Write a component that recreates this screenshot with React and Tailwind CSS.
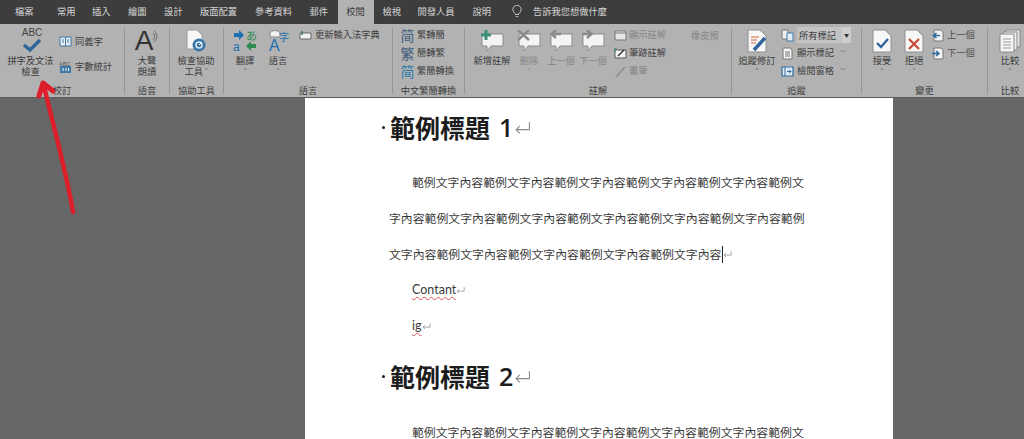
const tabs = [
  ['檔案', 'ml-[15px] mr-[23.5px]'],
  ['常用', 'mr-[16.5px]'],
  ['插入', 'mr-[17.5px]'],
  ['繪圖', 'mr-[17.5px]'],
  ['設計', 'mr-[17.5px]'],
  ['版面配置', 'mr-[18px]'],
  ['參考資料', 'mr-[17.5px]'],
  ['郵件', 'mr-[9.5px]'],
]
const tabsAfter = [
  ['檢視', 'ml-[9px] mr-[16.5px]'],
  ['開發人員', 'mr-[18px]'],
  ['說明', 'mr-[21px]'],
]

const line1 = '範例文字內容'.repeat(5) + '範例文'
const line2 = '字內容' + '範例文字內容'.repeat(5) + '範例'
const line3 = '文字內容' + '範例文字內容'.repeat(4)

function Ret({ big }) {
  return (
    <svg viewBox="0 0 16 12" className={big ? 'ml-[1px] h-[13px] w-[17px] shrink-0' : 'h-[8px] w-[9px] shrink-0'} fill="none" stroke="#8a8a8a" strokeWidth={big ? 1 : 1.3}>
      <path d="M14.5 1v7H2M5.5 4.5 2 8l3.5 3.5" />
    </svg>
  )
}

function Big({ w, icon, lines, off, className = '' }) {
  return (
    <div className={`flex shrink-0 flex-col items-center ${w} ${className}`}>
      <div className="flex h-[28px] w-full items-center justify-center">{icon}</div>
      {lines.map((l) => (
        <span key={l} className={`whitespace-nowrap text-[9.25px] leading-[11px] ${off ? 'text-[#868686]' : 'text-[#3d3d3d]'}`}>{l}</span>
      ))}
    </div>
  )
}

function Small({ icon, text, off, caret, gap = 'mr-[4px]', className = '' }) {
  return (
    <div className={`flex h-[18px] items-center whitespace-nowrap text-[9.25px] ${off ? 'text-[#868686]' : 'text-[#3d3d3d]'} ${className}`}>
      <span className={`flex w-[13px] shrink-0 justify-center ${gap}`}>{icon}</span>
      {text}
      {caret && <span className="ml-[6px] text-[6px] leading-[8px] text-[#666]">﹀</span>}
    </div>
  )
}

function Group({ w, label, labelClass = 'text-center', children }) {
  return (
    <div className={`flex h-full shrink-0 flex-col border-r border-[#979797] ${w}`}>
      <div className="flex flex-1">{children}</div>
      <div className={`-mb-[2px] text-[9.25px] leading-[12px] text-[#3d3d3d] ${labelClass}`}>{label}</div>
    </div>
  )
}

const Note = ({ off }) => (
  <svg viewBox="0 0 24 22" className="h-[22px] w-[24px]">
    <path d="M2 4h21v12H11l-4 5v-5H2z" fill="#f4f4f4" stroke="#8b8b8b" />
    {off === 'x' && <path d="M1 0l11 10M12 0 1 10" stroke="#8a8a8a" strokeWidth="2.4" />}
    {off === 'l' && <path d="M12 4H3M7 0 2.5 4 7 8" fill="none" stroke="#8a8a8a" strokeWidth="2.4" />}
    {off === 'r' && <path d="M1 4h9M6 0l4.5 4L6 8" fill="none" stroke="#8a8a8a" strokeWidth="2.4" />}
    {off === 'p' && <path d="M6 0v10M1 5h10" stroke="#3f8f78" strokeWidth="3" />}
  </svg>
)

const Page = ({ children }) => (
  <svg viewBox="0 0 20 24" className="h-[24px] w-[20px]">
    <path d="M1 1h12l6 6v16H1z" fill="#f7f7f7" stroke="#8f8f8f" />
    {children}
  </svg>
)

const Mini = ({ children }) => (
  <svg viewBox="0 0 13 13" className="h-[13px] w-[13px] overflow-visible">{children}</svg>
)

const Sheet = ({ mark }) => (
  <Mini>
    <path d="M2 1h7l2 2v9H2z" fill="#f2f2f2" stroke="#777" />
    {mark === 'r' && <path d="M0 6.500h6M4 4l3 2.500L4 9" fill="none" stroke="#2a6aa0" strokeWidth="1.500" />}
    {mark === 'l' && <path d="M8 6.500H2M4.500 4l-3 2.500L4.500 9" fill="none" stroke="#2a6aa0" strokeWidth="1.500" />}
    {mark === 't' && <path d="M4 5h5M4 7h5M4 9h5" stroke="#777" />}
  </Mini>
)

function Ribbon() {
  return (
    <div className="flex h-[73px] shrink-0 bg-[#b2b2b2] py-[3px]">
      <Group w="w-[125px]" label="校訂">
        <Big
          w="w-[57px]"
          className="ml-[2px]"
          lines={['拼字及文法', '檢查']}
          icon={
            <div className="relative flex h-full w-full justify-center pl-[3px]">
              <span className="font-['Liberation_Sans'] text-[10px] leading-[11px] text-[#444]">ABC</span>
              <svg viewBox="0 0 20 14" className="absolute left-[20px] top-[10px] h-[16px] w-[20px]">
                <path d="M2 7l6 5L18 2" fill="none" stroke="#2f659b" strokeWidth="3.400" />
              </svg>
            </div>
          }
        />
        <div className="flex flex-col pt-[2px]">
          <Small
            className="h-[25px]"
            gap="mr-[3px]"
            text="同義字"
            icon={<Mini><path d="M1 2h11v9H1z" fill="#e8eef3" stroke="#3f78a5" /><path d="M6.500 2v9M3 5h2M3 7h2M8 5h2M8 7h2" stroke="#3f78a5" /></Mini>}
          />
          <Small
            className="h-[25px]"
            gap="mr-[3px]"
            text="字數統計"
            icon={<Mini><path d="M1 6h11v7H1z" fill="#3f78a5" /><path d="M4 8v3M7 8v3M9.500 8v3" stroke="#fff" /><text x="0" y="5.500" fontSize="5.500" fill="#555" fontFamily="Liberation Sans">ABC</text></Mini>}
          />
        </div>
      </Group>

      <Group w="w-[45px]" label="語音">
        <Big
          w="w-full"
          lines={['大聲', '朗讀']}
          icon={
            <div className="flex h-full items-end">
              <span className="font-['Liberation_Sans'] text-[28px] leading-[28px] text-[#333]">A</span>
              <svg viewBox="0 0 6 14" className="mb-[12px] h-[13px] w-[6px]"><path d="M1 1c4 4 4 8 0 12M0 3c2 2 2 6 0 8" fill="none" stroke="#555" strokeWidth=".8" /></svg>
            </div>
          }
        />
      </Group>

      <Group w="w-[54px]" label="協助工具">
        <Big
          w="w-[52px]"
          lines={['檢查協助', '工具 ˅']}
          icon={
            <svg viewBox="0 0 22 24" className="h-[24px] w-[22px]">
              <path d="M2 1h10l5 5v14H2z" fill="#f7f7f7" stroke="#999" />
              <circle cx="14" cy="16" r="6.500" fill="#3a75a8" />
              <circle cx="14" cy="16" r="3" fill="none" stroke="#dfeaf3" strokeWidth="1.500" />
              <path d="M14 16l3-3" stroke="#fff" />
            </svg>
          }
        />
      </Group>

      <Group w="w-[169px]" label="語言">
        <Big
          w="w-[30px]"
          className="ml-[6px]"
          lines={['翻譯', '˅']}
          icon={
            <svg viewBox="0 0 24 22" className="h-[22px] w-[24px] overflow-visible">
              <path d="M1 3h5V0l5 5-5 5V7H1z" fill="#1c6fb0" />
              <text x="13" y="10" fontSize="11" fill="#2e8a4d" fontFamily="Noto Sans CJK JP">あ</text>
              <text x="0" y="21" fontSize="12" fill="#1c6fb0" fontFamily="Liberation Sans">a</text>
              <path d="M23 14h-5v-3l-5 5 5 5v-3h5z" fill="#2e8a4d" />
            </svg>
          }
        />
        <Big
          w="w-[30px]"
          className="ml-[3px]"
          lines={['語言', '˅']}
          icon={
            <svg viewBox="0 0 24 22" className="h-[22px] w-[24px] overflow-visible">
              <path d="M4 4a5 3.500 0 0 1 10 0v3H4z" fill="#f0f0f0" stroke="#888" />
              <text x="3" y="21" fontSize="16" fill="#1c6fb0" fontFamily="Liberation Sans">A</text>
              <text x="13" y="11" fontSize="10" fill="#1c6fb0" fontFamily="Noto Sans CJK TC">字</text>
            </svg>
          }
        />
        <Small
          className="ml-[6px] mt-[-1px]"
          gap="mr-[3px]"
          text="更新輸入法字典"
          icon={<Mini><path d="M1 4h11v6H1z" fill="#f2f2f2" stroke="#666" /><path d="M3 2v4" stroke="#2e8a4d" strokeWidth="1.500" /></Mini>}
        />
      </Group>

      <Group w="w-[72px]" label="中文繁簡轉換">
        <div className="ml-[8px] mt-[-1px] flex flex-col">
          <Small gap="mr-[3px]" text="繁轉簡" icon={<span className="text-[14px] leading-[14px] text-[#3f5f7f]">简</span>} />
          <Small gap="mr-[3px]" text="簡轉繁" icon={<span className="text-[14px] leading-[14px] text-[#3f5f7f]">繁</span>} />
          <Small gap="mr-[3px]" text="繁簡轉換" icon={<span className="text-[14px] leading-[14px] text-[#2a78a8]">简</span>} />
        </div>
      </Group>

      <Group w="w-[267px]" label="註解">
        <Big w="w-[40px]" className="ml-[7px]" lines={['新增註解']} icon={<Note off="p" />} />
        <Big w="w-[30px]" className="ml-[2px]" off lines={['刪除', '˅']} icon={<Note off="x" />} />
        <Big w="w-[32px]" className="ml-[1px]" off lines={['上一個']} icon={<Note off="l" />} />
        <Big w="w-[32px]" off lines={['下一個']} icon={<Note off="r" />} />
        <div className="ml-[5px] mt-[-1px] flex flex-col">
          <Small off gap="mr-[2px]" text="顯示註解" icon={<Mini><path d="M1 2h11v9H1z" fill="#e6e6e6" stroke="#777" /><path d="M1 4h11" stroke="#777" /></Mini>} />
          <Small gap="mr-[2px]" text="筆跡註解" icon={<Mini><path d="M1 3h11v8H1z" fill="#f4f4f4" stroke="#555" /><path d="M4 9l6-6" stroke="#333" strokeWidth="1.500" /><path d="M1 1v4M0 2h3" stroke="#3f8f78" /></Mini>} />
          <Small off gap="mr-[2px]" text="畫筆" icon={<Mini><path d="M2 12 11 2" stroke="#8a8a8a" strokeWidth="1.200" /></Mini>} />
        </div>
        <div className="ml-[25px] mt-[-1px] h-[18px] whitespace-nowrap text-[9.25px] leading-[18px] text-[#868686]">橡皮擦</div>
      </Group>

      <Group w="w-[130px]" label="追蹤">
        <Big
          w="w-[40px]"
          className="ml-[5px]"
          lines={['追蹤修訂', '˅']}
          icon={
            <Page>
              <path d="M4 8h8M4 11h6M4 14h5" stroke="#cf6a3a" />
              <path d="M7 21 18 9" stroke="#2f659b" strokeWidth="3.500" />
            </Page>
          }
        />
        <div className="ml-[4px] mt-[-1px] flex flex-col">
          <div className="flex h-[18px] items-center">
            <span className="mr-[3px] flex w-[13px] justify-center">
              <Mini><path d="M1 1h6v9H1z" fill="#eee" stroke="#777" /><path d="M6 4h6v8H6z" fill="#e4ecf3" stroke="#3f78a5" /></Mini>
            </span>
            <div className="flex h-[16px] w-[54px] items-stretch">
              <span className="flex-1 bg-[#c3c3c3] pl-[2px] text-[9.25px] leading-[16px] text-[#3d3d3d]">所有標記</span>
              <span className="flex w-[9px] items-center justify-center bg-[#cdcdcd] text-[5px] text-[#333]">▼</span>
            </div>
          </div>
          <Small gap="mr-[3px]" text="顯示標記" caret icon={<Sheet mark="t" />} />
          <Small gap="mr-[3px]" text="檢閱窗格" caret icon={<Mini><path d="M1 2h11v9H1z" fill="#e4ecf3" stroke="#2a6aa0" strokeWidth="1.200" /><path d="M4 2v9" stroke="#2a6aa0" /><path d="M6 6.500h4M8 4.500l2 2-2 2" fill="none" stroke="#2a6aa0" /></Mini>} />
        </div>
      </Group>

      <Group w="w-[126px]" label="變更">
        <Big
          w="w-[30px]"
          className="ml-[5px]"
          lines={['接受', '˅']}
          icon={<Page><path d="M5 14l4 4 7-8" fill="none" stroke="#2f659b" strokeWidth="2.400" /></Page>}
        />
        <Big
          w="w-[30px]"
          className="ml-[2px]"
          lines={['拒絕', '˅']}
          icon={<Page><path d="M5 10l10 10M15 10 5 20" stroke="#c8503a" strokeWidth="2.400" /></Page>}
        />
        <div className="ml-[3px] mt-[-1px] flex flex-col">
          <Small gap="mr-[2px]" text="上一個" icon={<Sheet mark="l" />} className="text-[#505050]" />
          <Small gap="mr-[2px]" text="下一個" icon={<Sheet mark="r" />} className="text-[#505050]" />
        </div>
      </Group>

      <div className="flex h-full flex-1 flex-col pl-[10px]">
        <Big
          w="w-[24px]"
          lines={['比較', '˅']}
          icon={
            <svg viewBox="0 0 22 24" className="h-[24px] w-[22px]">
              <path d="M7 1h14v17H7z" fill="#e6e6e6" stroke="#888" />
              <path d="M4 3h14v18H4z" fill="#eee" stroke="#888" />
              <path d="M1 5h14v18H1z" fill="#f6f6f6" stroke="#888" />
              <path d="M4 10h8M4 13h8M4 16h8M4 19h8" stroke="#999" />
            </svg>
          }
        />
        <div className="-mb-[2px] mt-auto w-[24px] text-center text-[9.25px] leading-[12px] text-[#3d3d3d]">比較</div>
      </div>
    </div>
  )
}

function BodyLine({ children, indent }) {
  return (
    <div className={`flex h-[36px] items-center whitespace-nowrap text-[11.89px] text-[#3a3a3a] ${indent ? 'pl-[23px]' : ''}`}>
      {children}
    </div>
  )
}

function Heading({ n, className = '' }) {
  return (
    <div className={`flex items-center whitespace-nowrap text-[25px] font-bold leading-[36px] text-[#1c1c1c] ${className}`}>
      <span className="-ml-[8px] mr-[5px] h-[3px] w-[3px] rounded-full bg-[#1c1c1c]" />
      範例標題
      <span className="ml-[9px] font-['Open_Sans'] font-semibold">{n}</span>
      <Ret big />
    </div>
  )
}

export default function App() {
  return (
    <div className="relative flex h-[439px] w-[1024px] flex-col overflow-hidden bg-[#676767] font-['Noto_Sans_CJK_TC','Noto_Sans',sans-serif]">
      <div className="flex h-[24px] shrink-0 items-center bg-[#3d3d3d] text-[9.25px] text-[#d6d6d6]">
        {tabs.map(([t, c]) => (
          <span key={t} className={c}>{t}</span>
        ))}
        <span className="flex h-full w-[36px] items-center justify-center bg-[#b2b2b2] text-[#3d3d3d]">校閱</span>
        {tabsAfter.map(([t, c]) => (
          <span key={t} className={c}>{t}</span>
        ))}
        <svg viewBox="0 0 12 16" className="mr-[11px] h-[14px] w-[10px]" fill="none" stroke="#dcdcdc">
          <path d="M4 11c0-2-3-3-3-6a5 5 0 0 1 10 0c0 3-3 4-3 6zM4.500 13.500h3" />
        </svg>
        <span>告訴我您想做什麼</span>
      </div>

      <Ribbon />

      <div className="flex flex-1 border-t border-[#5c5c5c]">
        <div className="ml-[305px] h-full w-[588px] bg-white pl-[84px] pt-[11px]">
          <Heading n="1" className="pl-[1px]" />
          <div className="mt-[19px]">
            <BodyLine indent>{line1}</BodyLine>
            <BodyLine>{line2}</BodyLine>
            <BodyLine>
              {line3}
              <span className="h-[17px] w-px bg-[#222]" />
              <Ret />
            </BodyLine>
            <BodyLine indent>
              <span className="font-['Lato'] text-[12.5px] underline decoration-[#d9534f] decoration-wavy decoration-1 underline-offset-2 [text-decoration-skip-ink:none]">Contant</span>
              <Ret />
            </BodyLine>
            <BodyLine indent>
              <span className="font-['Lato'] text-[12.5px] underline decoration-[#d9534f] decoration-wavy decoration-1 underline-offset-2 [text-decoration-skip-ink:none]">ig</span>
              <Ret />
            </BodyLine>
          </div>
          <Heading n="2" className="mt-[14px] pl-[1px]" />
          <div className="mt-[20px]">
            <BodyLine indent>{line1}</BodyLine>
          </div>
        </div>
      </div>

      <svg viewBox="0 0 1024 439" className="pointer-events-none absolute inset-0 h-[439px] w-[1024px]" fill="none" stroke="#dd1f2b" strokeLinecap="round" strokeLinejoin="round">
        <path d="M73 212C66 170 53 125 44 86" strokeWidth="4.500" />
        <path d="M39 96 43 83 53 91" strokeWidth="5" />
      </svg>
    </div>
  )
}
